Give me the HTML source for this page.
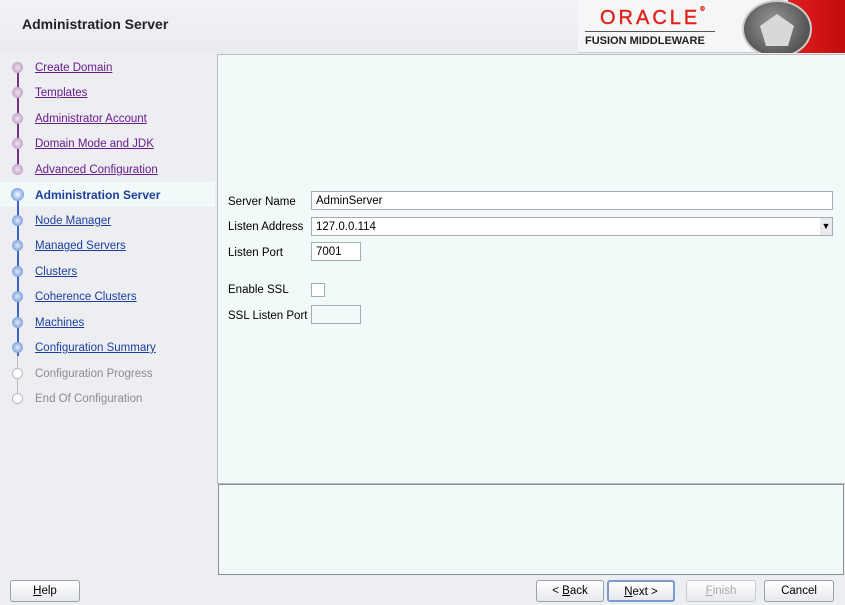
<!DOCTYPE html>
<html><head><style>
*{margin:0;padding:0;box-sizing:border-box}
body{width:845px;height:605px;overflow:hidden;background:#eceef2;font-family:"Liberation Sans",sans-serif;font-size:11.5px;position:relative;color:#000}
.abs{position:absolute}
.nav a{position:absolute;left:35px;color:#6a1b8a;text-decoration:underline;font-size:11.5px;white-space:nowrap;margin-top:2px}
.nav a.b{color:#1d3e9c}
.nav a.g{color:#8c8c8c;text-decoration:none}
.dot{position:absolute;left:12px;width:11px;height:11px;border-radius:50%}
.lbl{position:absolute;left:228px;font-size:11.5px;margin-top:2px}
.inp{position:absolute;background:#fff;border:1px solid #a8acb0;font-size:11.5px;padding:3px 4px 0;height:19px}
.btn{position:absolute;top:580px;height:22px;border:1px solid #9aa0a8;border-radius:3px;background:linear-gradient(#fff,#e6e8ec);text-align:center;line-height:20px;font-size:11.5px}
</style></head><body>
<div class="abs" style="left:0;top:0;width:845px;height:53px;background:linear-gradient(#f2f3f6,#e9ebef)"></div>
<div class="abs" style="left:22px;top:16px;font-size:14px;font-weight:bold;color:#222">Administration Server</div>
<div class="abs" style="left:578px;top:0;width:267px;height:53px;background:#f4f6f8;border-bottom:1px solid #c8ccd2"></div>
<div class="abs" style="left:600px;top:7px;font-size:20px;color:#e2231a;letter-spacing:3px;-webkit-text-stroke:0.4px #e2231a">ORACLE<span style="font-size:6px;vertical-align:top;letter-spacing:0">®</span></div>
<div class="abs" style="left:585px;top:31px;width:130px;height:1px;background:#555"></div>
<div class="abs" style="left:585px;top:35px;font-size:11px;font-weight:bold;color:#222">FUSION MIDDLEWARE</div>
<div class="abs" style="left:788px;top:0;width:57px;height:53px;background:linear-gradient(90deg,#e02020,#c20a0a)"></div>
<div class="abs" style="left:742px;top:0;width:70px;height:58px;border-radius:50%;background:radial-gradient(circle at 45% 40%,#9a9a9a,#555 70%);border:2px solid #ccc;clip-path:inset(0 0 5px 0)"></div>
<svg class="abs" style="left:757px;top:12px" width="40" height="36"><polygon points="20,2 37,14 31,34 9,34 3,14" fill="#d8d8da"/></svg>
<div class="abs" style="left:0;top:182px;width:215px;height:25px;background:#f2f9f9"></div>
<div class="abs" style="left:17px;top:72px;width:2px;height:100px;background:#7a2e86"></div>
<div class="abs" style="left:17px;top:194px;width:2px;height:162px;background:#3e63c2"></div>
<div class="abs" style="left:17px;top:356px;width:1px;height:44px;background:#bbb"></div>
<div class="nav">
<div class="dot" style="top:62px;background:radial-gradient(#f0e4f0,#b08cb8)"></div><a style="top:60px">Create Domain</a>
<div class="dot" style="top:87px;background:radial-gradient(#f0e4f0,#b08cb8)"></div><a style="top:85px">Templates</a>
<div class="dot" style="top:113px;background:radial-gradient(#f0e4f0,#b08cb8)"></div><a style="top:111px">Administrator Account</a>
<div class="dot" style="top:138px;background:radial-gradient(#f0e4f0,#b08cb8)"></div><a style="top:136px">Domain Mode and JDK</a>
<div class="dot" style="top:164px;background:radial-gradient(#f0e4f0,#b08cb8)"></div><a style="top:162px">Advanced Configuration</a>
<div class="dot" style="top:188px;left:11px;width:13px;height:13px;background:radial-gradient(#fff,#8fb4e8 60%,#5a86d0)"></div><a class="b" style="top:186px;font-weight:bold;text-decoration:none;font-size:12px">Administration Server</a>
<div class="dot" style="top:215px;background:radial-gradient(#dfe9f8,#5a86d0)"></div><a class="b" style="top:213px">Node Manager</a>
<div class="dot" style="top:240px;background:radial-gradient(#dfe9f8,#5a86d0)"></div><a class="b" style="top:238px">Managed Servers</a>
<div class="dot" style="top:266px;background:radial-gradient(#dfe9f8,#5a86d0)"></div><a class="b" style="top:264px">Clusters</a>
<div class="dot" style="top:291px;background:radial-gradient(#dfe9f8,#5a86d0)"></div><a class="b" style="top:289px">Coherence Clusters</a>
<div class="dot" style="top:317px;background:radial-gradient(#dfe9f8,#5a86d0)"></div><a class="b" style="top:315px">Machines</a>
<div class="dot" style="top:342px;background:radial-gradient(#dfe9f8,#5a86d0)"></div><a class="b" style="top:340px">Configuration Summary</a>
<div class="dot" style="top:368px;background:#fff;border:1px solid #bbb"></div><a class="g" style="top:366px">Configuration Progress</a>
<div class="dot" style="top:393px;background:#fff;border:1px solid #bbb"></div><a class="g" style="top:391px">End Of Configuration</a>
</div>
<div class="abs" style="left:217px;top:54px;width:628px;height:430px;background:#f2f9f9;border:1px solid #b8bcc2;border-right:none"></div>
<div class="abs" style="left:218px;top:484px;width:626px;height:91px;background:#f2f9f9;border:1px solid #8c9096"></div>
<div class="lbl" style="top:194px">Server Name</div>
<div class="inp" style="left:311px;top:191px;width:522px">AdminServer</div>
<div class="lbl" style="top:219px">Listen Address</div>
<div class="inp" style="left:311px;top:217px;width:522px">127.0.0.114</div>
<div class="abs" style="left:820px;top:218px;width:12px;height:17px;background:#e8eaee;font-size:9px;text-align:center;line-height:17px">▼</div>
<div class="lbl" style="top:245px">Listen Port</div>
<div class="inp" style="left:311px;top:242px;width:50px">7001</div>
<div class="lbl" style="top:282px">Enable SSL</div>
<div class="inp" style="left:311px;top:283px;width:14px;height:14px"></div>
<div class="lbl" style="top:308px">SSL Listen Port</div>
<div class="inp" style="left:311px;top:305px;width:50px;background:#f2f9f9"></div>
<div class="btn" style="left:10px;width:70px"><u>H</u>elp</div>
<div class="btn" style="left:536px;width:68px">&lt; <u>B</u>ack</div>
<div class="btn" style="left:607px;width:68px;border:2px solid #7a9ad0"><u>N</u>ext &gt;</div>
<div class="btn" style="left:686px;width:70px;color:#aaa;border-color:#c8ccd2"><u>F</u>inish</div>
<div class="btn" style="left:764px;width:70px">Cancel</div>
</body></html>
